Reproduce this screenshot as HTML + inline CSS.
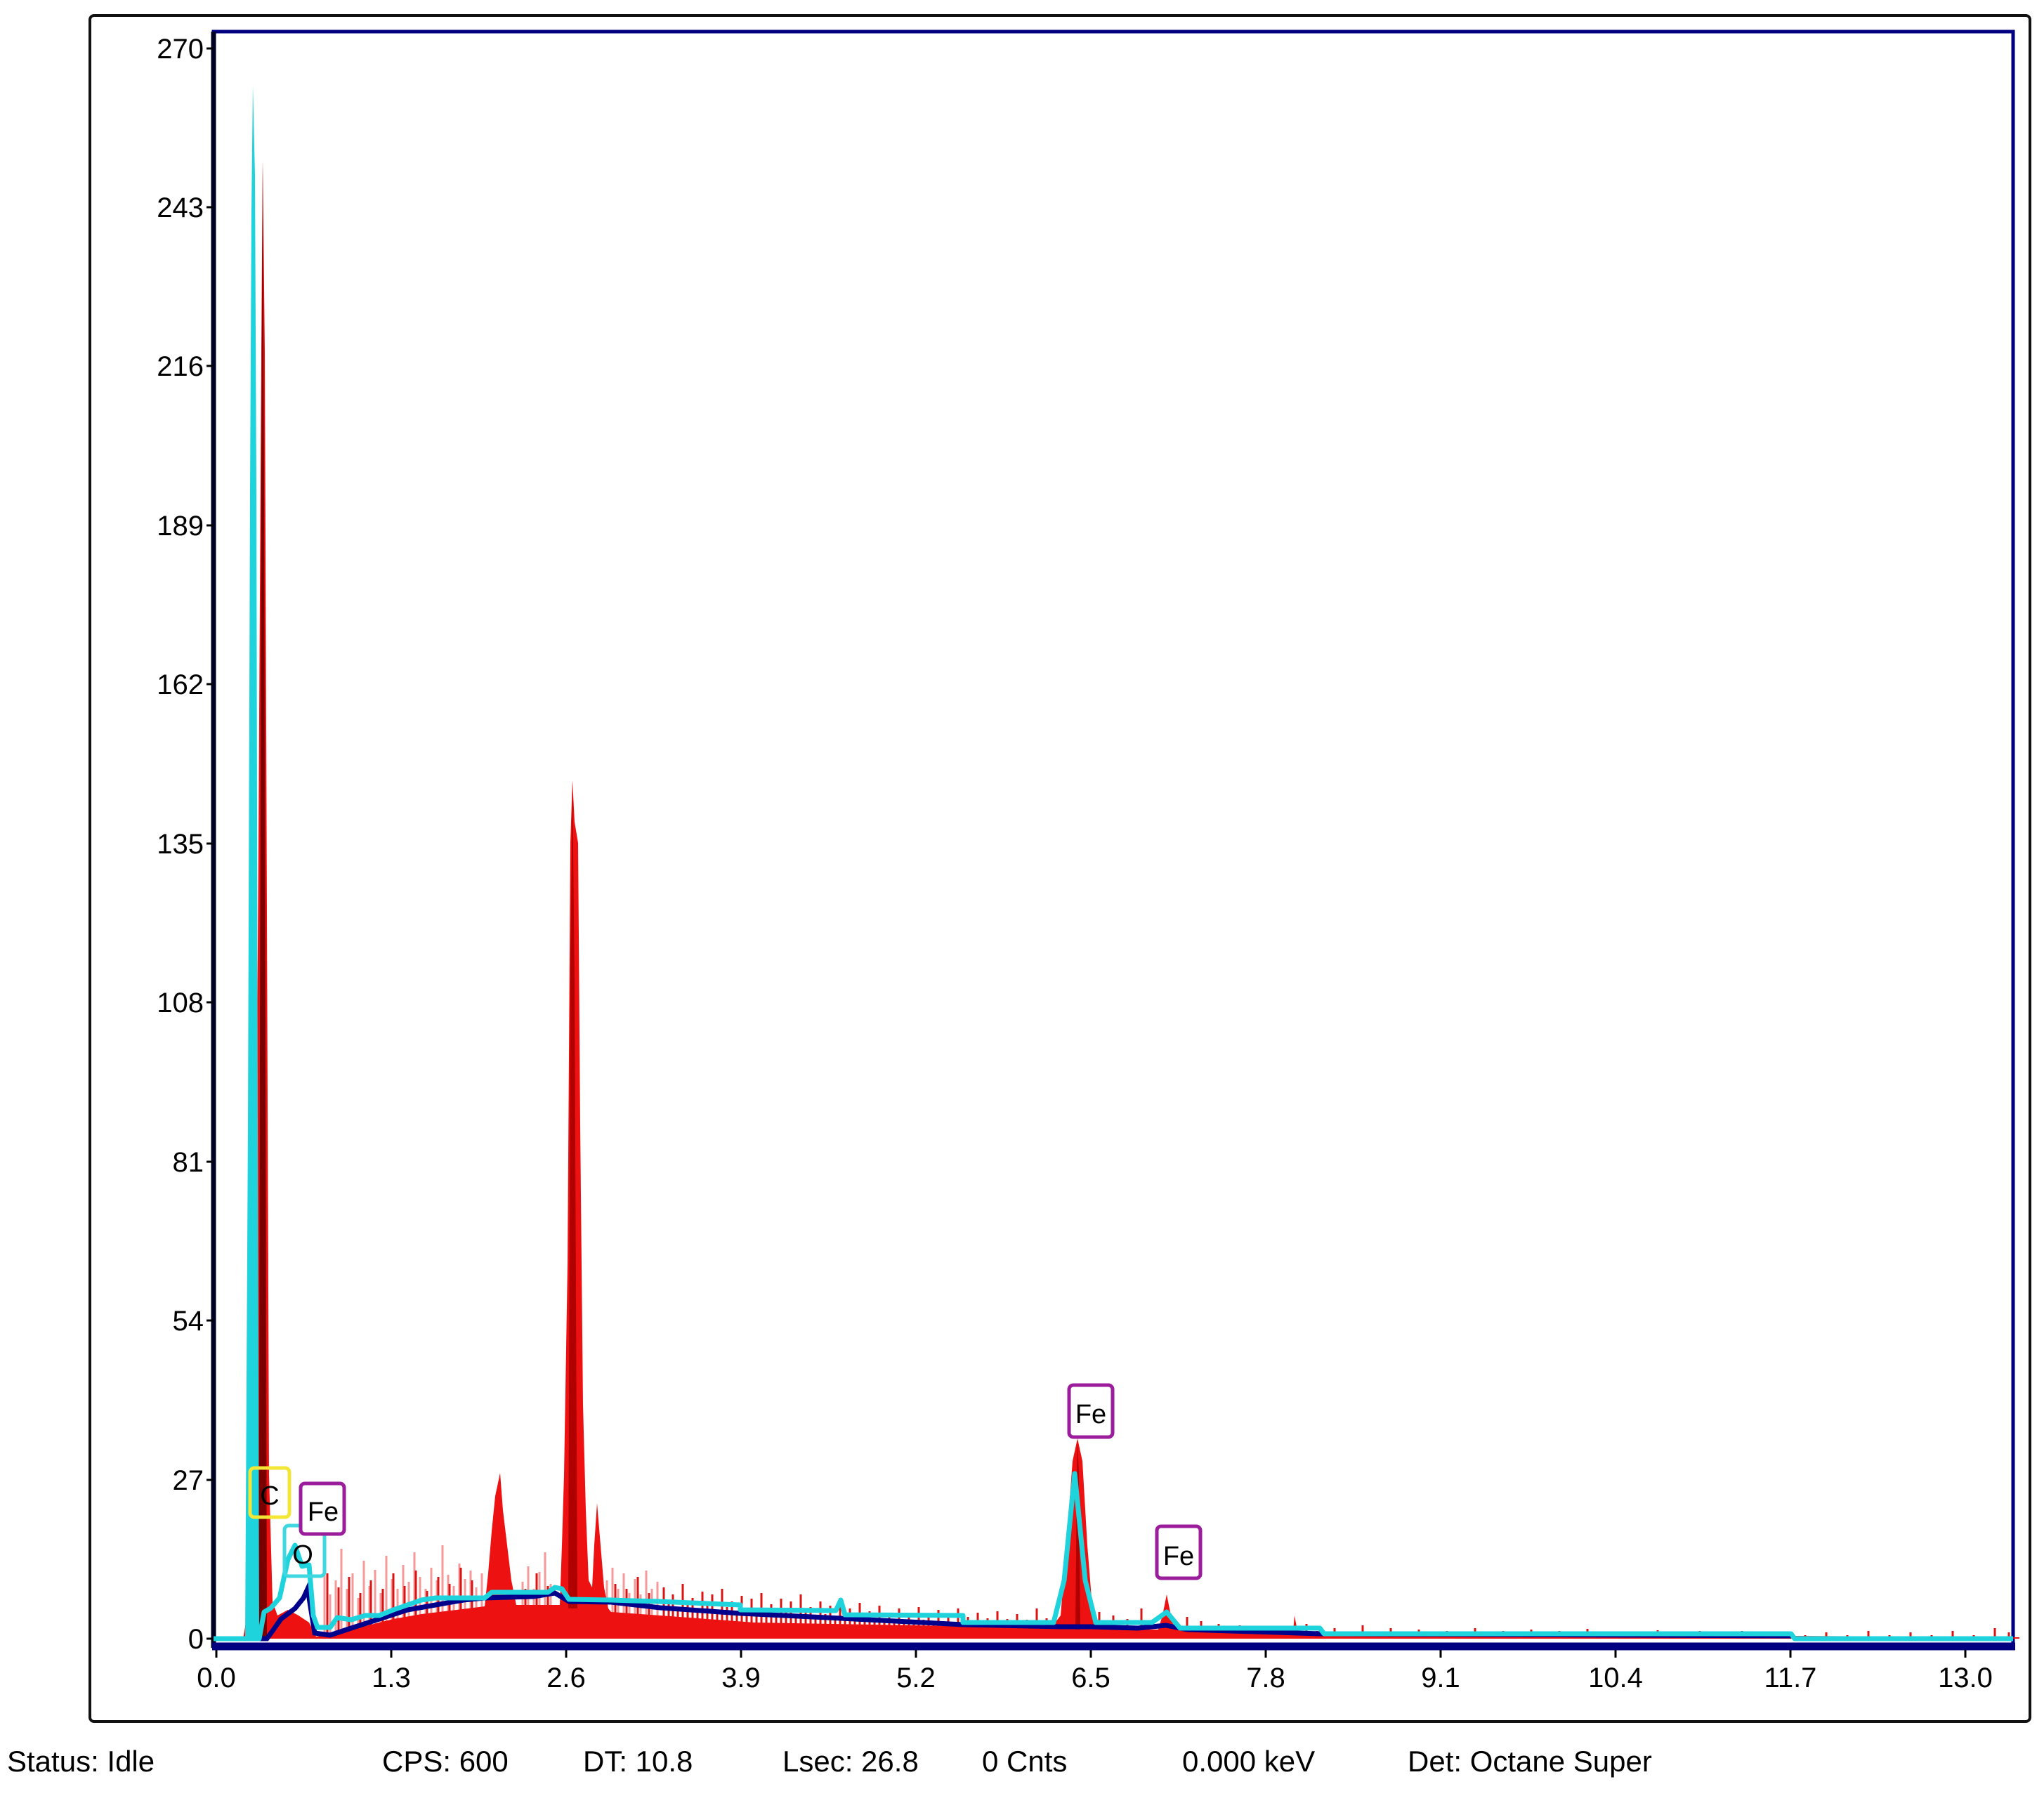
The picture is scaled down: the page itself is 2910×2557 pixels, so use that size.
<!DOCTYPE html>
<html><head><meta charset="utf-8">
<style>
html,body{margin:0;padding:0;background:#fff;}
svg{display:block;}
text{font-family:"Liberation Sans Narrow","Liberation Sans",sans-serif;fill:#000;}
</style></head>
<body>
<svg width="2910" height="2557" viewBox="0 0 2910 2557" xmlns="http://www.w3.org/2000/svg">
<rect x="0" y="0" width="2910" height="2557" fill="#fff"/>
<rect x="128" y="22" width="2762" height="2429" rx="6" fill="none" stroke="#111" stroke-width="4"/>
<rect x="304" y="45" width="2562" height="2299" fill="#fff" stroke="#000080" stroke-width="5"/>
<line x1="304" y1="45" x2="304" y2="2346" stroke="#000022" stroke-width="7"/>

<!-- light pink noise spikes -->
<g stroke="#f49a9a" stroke-width="3">
<path d="M462 2333V2230M470 2333V2270M478 2333V2250M486 2333V2205M494 2333V2262M502 2333V2240M510 2333V2275M518 2333V2222M526 2333V2258M534 2333V2235M542 2333V2268M550 2333V2215M558 2333V2248M566 2333V2262M574 2333V2228M582 2333V2252M590 2333V2210M598 2333V2245M606 2333V2262M614 2333V2232M622 2333V2250M630 2333V2200M638 2333V2242M646 2333V2258M654 2333V2226M662 2333V2248M670 2333V2236M678 2333V2260M686 2333V2240M744 2333V2252M752 2333V2230M760 2333V2262M768 2333V2238M776 2333V2210M784 2333V2255M864 2333V2250M872 2333V2232M880 2333V2262M888 2333V2240M896 2333V2268M904 2333V2248M912 2333V2270M920 2333V2236M928 2333V2262M936 2333V2252"/>
</g>
<!-- red noise spikes -->
<g stroke="#d81414" stroke-width="3">
<path d="M466 2333V2240M482 2333V2260M497 2333V2245M513 2333V2268M528 2333V2250M545 2333V2262M560 2333V2240M576 2333V2258M592 2333V2236M608 2333V2265M624 2333V2245M640 2333V2255M656 2333V2232M672 2333V2250M748 2333V2262M764 2333V2240M780 2333V2258M876 2333V2255M892 2333V2262M908 2333V2245M924 2333V2268"/>
<path d="M945 2333V2260M952 2333V2280M958 2333V2270M965 2333V2290M972 2333V2255M979 2333V2282M986 2333V2275M993 2333V2292M1000 2333V2266M1007 2333V2286M1014 2333V2270M1021 2333V2294M1028 2333V2262M1035 2333V2288M1042 2333V2280M1049 2333V2296M1056 2333V2272M1063 2333V2290M1070 2333V2276M1077 2333V2298M1084 2333V2268M1091 2333V2292M1098 2333V2284M1105 2333V2299M1112 2333V2276M1119 2333V2294M1126 2333V2280M1133 2333V2300M1140 2333V2270M1147 2333V2296M1154 2333V2288M1161 2333V2302M1168 2333V2280M1175 2333V2298M1182 2333V2286M1189 2333V2304M1196 2333V2275M1203 2333V2300M1210 2333V2290M1217 2333V2306M1224 2333V2282M1231 2333V2302M1238 2333V2294M1245 2333V2308M1252 2333V2286M1259 2333V2304M1266 2333V2296M1273 2333V2309M1280 2333V2290M1287 2333V2306M1294 2333V2298M1301 2333V2310M1308 2333V2288M1315 2333V2306M1322 2333V2298M1329 2333V2311M1336 2333V2292M1343 2333V2308M1350 2333V2300M1357 2333V2312M1364 2333V2290M1371 2333V2308M1378 2333V2302M1385 2333V2313M1392 2333V2296M1399 2333V2310M1406 2333V2304M1413 2333V2314M1420 2333V2294M1427 2333V2310M1434 2333V2305M1441 2333V2314M1448 2333V2298M1455 2333V2311M1462 2333V2306M1469 2333V2315M1476 2333V2290M1483 2333V2310M1490 2333V2304"/>
<path d="M1565 2333V2295M1575 2333V2312M1585 2333V2300M1595 2333V2315M1605 2333V2305M1615 2333V2318M1625 2333V2290M1635 2333V2316M1690 2333V2302M1700 2333V2318M1710 2333V2308M1720 2333V2320M1735 2333V2312M1750 2333V2322M1765 2333V2314M1780 2333V2322M1795 2333V2316M1810 2333V2324M1825 2333V2318M1860 2333V2312M1875 2333V2322M1900 2333V2318M1920 2333V2324M1940 2333V2314M1960 2333V2325M1980 2333V2318M2000 2333V2326M2020 2333V2320M2040 2333V2326M2060 2333V2322M2080 2333V2327M2100 2333V2318M2120 2333V2326M2140 2333V2322M2160 2333V2327M2180 2333V2320M2200 2333V2326M2220 2333V2322M2240 2333V2327M2260 2333V2319M2280 2333V2326M2300 2333V2323M2330 2333V2327M2360 2333V2321M2390 2333V2327M2420 2333V2322M2450 2333V2328M2480 2333V2322M2510 2333V2328M2540 2333V2323M2570 2333V2328M2600 2333V2324M2630 2333V2328M2660 2333V2322M2690 2333V2328M2720 2333V2324M2750 2333V2328M2780 2333V2322M2810 2333V2328M2840 2333V2318M2860 2333V2324"/>
</g>

<!-- red spectrum solid -->
<polygon fill="#ee1111" points="346,2333 352,2300 358,2200 364,1800 368,1200 372,500 374,229 377,500 380,1300 383,2100 388,2280 395,2300 410,2292 425,2300 440,2310 450,2330 480,2325 520,2315 560,2305 600,2298 650,2292 690,2287 695,2240 700,2180 705,2130 712,2097 716,2150 722,2200 728,2250 735,2285 790,2285 797,2285 800,2200 803,2100 808,1800 810,1500 812,1200 815,1111 818,1170 823,1200 826,1600 830,2000 834,2150 838,2250 843,2260 846,2200 850,2140 855,2200 860,2260 866,2290 870,2295 940,2300 1074,2310 1300,2314 1496,2318 1510,2300 1518,2200 1527,2080 1534,2048 1541,2080 1548,2200 1556,2300 1573,2320 1649,2320 1655,2300 1661,2270 1667,2300 1672,2320 1841,2322 1843,2300 1847,2322 1879,2328 2550,2329 2875,2331 2875,2333"/>
<!-- dark red cores -->
<polygon fill="#7a0000" points="368,2333 370,1500 372,700 374,229 376,700 378,1500 380,2333"/>
<polygon fill="#b00000" points="809,2290 812,1400 815,1111 818,1400 822,2290"/>
<polygon fill="#b00000" points="1531,2320 1533,2100 1534,2050 1536,2100 1538,2320"/>

<!-- cyan filled C peak -->
<polygon fill="#1ed3dc" points="349,2333 353,1600 356,700 358,300 360,122 363,250 365,700 367,1600 369,2333"/>

<!-- dark blue fit line -->
<polyline fill="none" stroke="#00008b" stroke-width="7" points="346,2333 380,2333 388,2322 400,2305 420,2290 432,2275 438,2262 444,2300 448,2325 470,2328 500,2318 540,2305 580,2292 620,2285 660,2278 690,2275 760,2273 790,2268 810,2280 870,2281 940,2289 1054,2297 1197,2304 1371,2313 1510,2316 1553,2316 1620,2318 1660,2314 1690,2320 1879,2326 2550,2329"/>

<!-- cyan line -->
<polyline fill="none" stroke="#1ed3dc" stroke-width="7" stroke-linejoin="round" points="304,2333 349,2333 369,2333 376,2295 385,2290 398,2275 410,2220 420,2200 430,2230 440,2228 446,2300 452,2317 470,2317 480,2303 500,2306 520,2300 540,2300 560,2292 580,2285 600,2278 620,2275 690,2275 700,2267 780,2267 790,2260 800,2262 810,2277 870,2278 900,2279 936,2280 1054,2285 1054,2292 1190,2293 1197,2278 1203,2299 1371,2300 1371,2310 1500,2310 1515,2250 1530,2098 1545,2250 1560,2310 1640,2310 1661,2295 1680,2318 1879,2318 1885,2326 2550,2326 2555,2333 2866,2333"/>

<line x1="302" y1="2344" x2="2869" y2="2344" stroke="#000080" stroke-width="11"/>

<!-- element labels -->
<g font-size="38">
<rect x="356" y="2090" width="56" height="70" rx="6" fill="none" stroke="#f4e634" stroke-width="5"/>
<text x="384" y="2142" text-anchor="middle">C</text>
<rect x="405" y="2172" width="57" height="72" rx="6" fill="none" stroke="#3fd8e0" stroke-width="5"/>
<text x="431" y="2226" text-anchor="middle">O</text>
<rect x="428" y="2112" width="62" height="72" rx="6" fill="#fff" stroke="#9b1d9b" stroke-width="5"/>
<text x="460" y="2165" text-anchor="middle">Fe</text>
<rect x="1522" y="1972" width="62" height="74" rx="6" fill="#fff" stroke="#9b1d9b" stroke-width="5"/>
<text x="1553" y="2026" text-anchor="middle">Fe</text>
<rect x="1647" y="2173" width="62" height="74" rx="6" fill="#fff" stroke="#9b1d9b" stroke-width="5"/>
<text x="1678" y="2228" text-anchor="middle">Fe</text>
</g>

<g stroke="#000" stroke-width="3">
<path d="M294 69H304M294 295H304M294 521H304M294 748H304M294 974H304M294 1201H304M294 1427H304M294 1654H304M294 1880H304M294 2107H304M294 2333H304"/>
<path d="M308 2349V2360M557 2349V2360M806 2349V2360M1055 2349V2360M1304 2349V2360M1553 2349V2360M1802 2349V2360M2051 2349V2360M2300 2349V2360M2549 2349V2360M2798 2349V2360"/>
</g>
<g font-size="40" text-anchor="end">
<text x="290" y="83">270</text>
<text x="290" y="309">243</text>
<text x="290" y="535">216</text>
<text x="290" y="762">189</text>
<text x="290" y="988">162</text>
<text x="290" y="1215">135</text>
<text x="290" y="1441">108</text>
<text x="290" y="1668">81</text>
<text x="290" y="1894">54</text>
<text x="290" y="2121">27</text>
<text x="290" y="2347">0</text>
</g>
<g font-size="40" text-anchor="middle">
<text x="308" y="2402">0.0</text>
<text x="557" y="2402">1.3</text>
<text x="806" y="2402">2.6</text>
<text x="1055" y="2402">3.9</text>
<text x="1304" y="2402">5.2</text>
<text x="1553" y="2402">6.5</text>
<text x="1802" y="2402">7.8</text>
<text x="2051" y="2402">9.1</text>
<text x="2300" y="2402">10.4</text>
<text x="2549" y="2402">11.7</text>
<text x="2798" y="2402">13.0</text>
</g>

<g font-size="42">
<text x="10" y="2522">Status: Idle</text>
<text x="544" y="2522">CPS: 600</text>
<text x="830" y="2522">DT: 10.8</text>
<text x="1114" y="2522">Lsec: 26.8</text>
<text x="1398" y="2522">0 Cnts</text>
<text x="1683" y="2522">0.000 keV</text>
<text x="2004" y="2522">Det: Octane Super</text>
</g>
</svg>
</body></html>
